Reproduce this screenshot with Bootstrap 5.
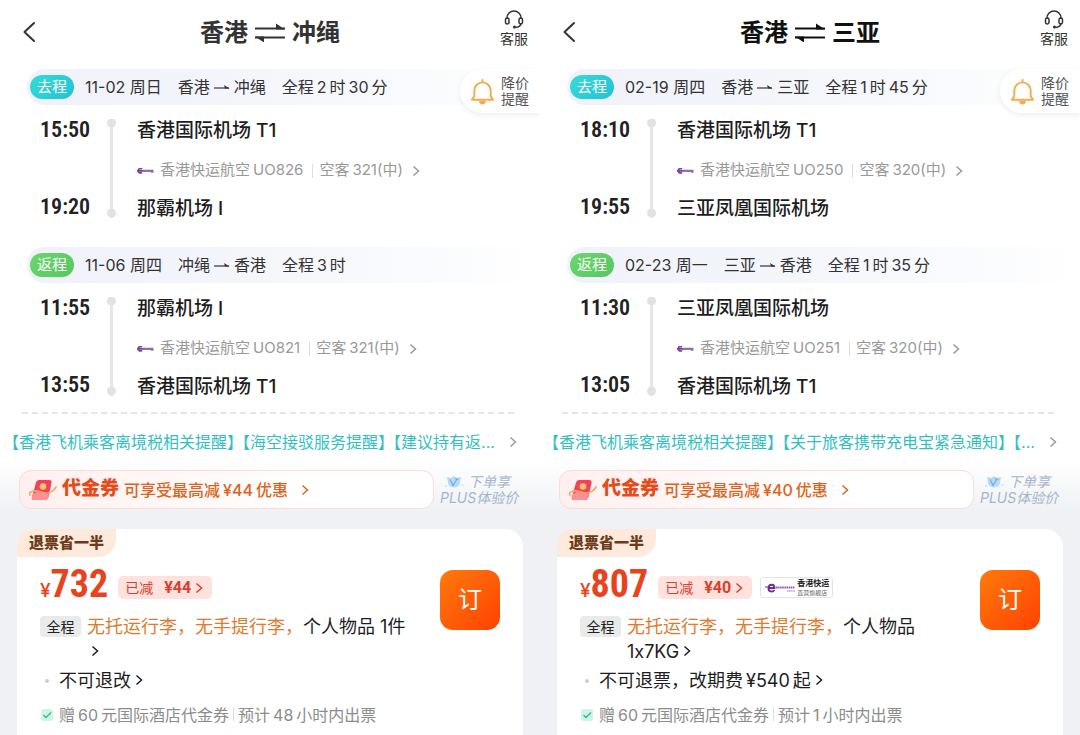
<!DOCTYPE html>
<html lang="zh-CN">
<head>
<meta charset="utf-8">
<meta name="viewport" content="width=device-width, initial-scale=1">
<title>香港往返机票</title>
<link href="https://cdn.jsdelivr.net/npm/bootstrap@5.3.0/dist/css/bootstrap.min.css" rel="stylesheet">
<style>
body{font-family:Inter,"Noto Sans CJK SC",sans-serif;color:#222;background:#fff;line-height:1.5}
svg{display:block;flex:none}
button{font-family:inherit}
.trip{min-height:100vh;background:linear-gradient(#fff 460px,#eff1f5 512px)}
.topbar{height:66px}
.topbar h1{font-size:24px;font-weight:700;color:#333;gap:6px}
.trip-b .topbar h1{color:#111}
.icon-btn{border:0;background:none;padding:0;color:#333}
.back{left:22px;top:20px}
.service{right:12px;top:10px;font-size:14px;line-height:20px}
.drop-alert{right:0;top:69px;width:80px;height:44px;border-radius:22px 0 0 22px;background:#fff;box-shadow:0 2px 6px rgba(0,0,0,.07);font-size:14px;line-height:16px;color:#555;gap:6px;padding-left:10px}
.leg-head{height:36px;margin:3px 0 0 27px;padding-left:3px;border-radius:18px 0 0 18px;background:linear-gradient(90deg,#f0f1fa,#f6f8fd 60%,#fff);font-size:16px;color:#333;gap:16px}
.leg-head .tag{height:24px;width:44px;border-radius:12px;color:#fff;font-size:15px;margin-right:-5px;background:linear-gradient(135deg,#35dcd8,#22c1d6)}
.leg-head .tag-back{background:linear-gradient(135deg,#6bd868,#55c763)}
.leg + .leg .leg-head{margin-top:18px}
.cities{gap:4px}
.leg-body{display:grid;grid-template-columns:47px 9px 1fr;column-gap:20px;padding:7px 20px 0 40px}
.times{font-family:"Roboto Condensed",Roboto,sans-serif;font-size:22px;font-weight:600;line-height:36px;text-align:right;color:#222;padding-bottom:4px}
.rail{width:9px;margin:7px 0 11px;background:radial-gradient(circle at 50% 4px,#e2e2e2 4px,transparent 5px),radial-gradient(circle at 50% calc(100% - 5px),#e2e2e2 4px,transparent 5px),linear-gradient(#e6e6e6,#e6e6e6) center/3px 100% no-repeat}
.places>div{height:39px}
.places{margin-left:1px}
.places .port{font-size:19px;font-weight:500;color:#1d1d1d}
.carrier{font-size:15px;color:#999;gap:6px}
.carrier .sep,.perk .sep{width:1px;height:14px;background:#ddd}
.n{margin:0 3px}
.rule{border-top:2px dashed #e6e6e8;margin:5px 26px 0 22px}
.notice{height:56px;font-size:16px;color:#33bfc2;text-decoration:none;padding:0 23px 0 11px}
.notice .msg{font-feature-settings:"halt";display:flex;gap:7px;white-space:nowrap}
.deal-row{padding:0 23px 0 19px;gap:6px}
.voucher{height:39px;border:1px solid #f8ddd9;border-radius:12px;background:linear-gradient(90deg,#fff0ef,#fff 70%);color:#dc6420;font-size:16px;font-weight:500;padding:0 9px;gap:5px}
.voucher b{font-size:19px;font-weight:900;color:#e34d1c}
.plus-price{width:77px;font-size:14px;font-style:italic;line-height:16px;color:#a3b5cb;text-decoration:none;white-space:nowrap}
.fare{margin:20px 17px 0;border-radius:18px 18px 0 0;background:#fff}
.ribbon{height:28px;width:99px;border-radius:16px 0 18px 0;background:#fdeadd;color:#6c3b19;font-weight:900;font-size:15px}
.fare-body{padding:9px 23px 0;gap:24px}
.price-line{height:43px;gap:10px;color:#e8431c}
.price{font-family:"Roboto Condensed",Roboto,sans-serif;font-size:38px;font-weight:700;line-height:43px}
.price small{font-size:19px;font-weight:500;font-family:Inter,sans-serif}
.saved{height:23px;border-radius:5px;background:#ffe2de;color:#d9402c;font-size:14px;border:0;padding:0 9px 0 7px;gap:11px}
.saved b{font-size:16px;font-family:Roboto,sans-serif}
.shop{height:21px;border:1px solid #e4e4e8;border-radius:3px;padding:0 3px 0 4px;gap:1px;font-size:6px;line-height:9px;color:#666;margin-left:-2px;white-space:nowrap}
.shop b{color:#222;font-size:8px}
.scope{background:#e9ebeb;border-radius:4px;font-size:14px;line-height:21px;height:21px;width:41px;color:#222}
.terms{font-size:18px;line-height:25px;color:#1d1d1d}
.warn{color:#df7b30}
.terms svg{display:inline-block;margin-left:4px;vertical-align:1px}
.bag{margin-top:5px;gap:6px;min-height:50px}
.bag .scope{margin-top:2px}
.rulesline{margin-top:4px;gap:10px;padding-left:5px}
.rulesline i{width:4px;height:4px;border-radius:50%;background:#ccc}
.perk{font-size:16px;line-height:24px;color:#8c8c8c;margin-top:10px;gap:5px;white-space:nowrap}
.perk .sep{display:inline-block;margin:0 4px}
.book{margin-top:4px;width:60px;height:60px;flex:none;border:0;border-radius:13px;background:linear-gradient(135deg,#ff7a0c,#ff4202);color:#fff;font-size:24px}
</style>
</head>
<body>
<svg width="0" height="0" class="position-absolute" aria-hidden="true">
<defs>
<symbol id="chev" viewBox="0 0 8 12"><path d="M1.500 1.500 6.500 6l-5 4.500" fill="none" stroke="currentColor" stroke-width="1.500"/></symbol>
<symbol id="backi" viewBox="0 0 14 24"><path d="M12 3 2.500 12 12 21" fill="none" stroke="currentColor" stroke-width="2" stroke-linecap="round" stroke-linejoin="round"/></symbol>
<symbol id="swap" viewBox="0 0 32 18"><path d="M1 5h30M1 14h30" stroke="currentColor" stroke-width="2"/><path d="M22 0 31 6H22zM10 19 1 13h9z" fill="currentColor"/></symbol>
<symbol id="to" viewBox="0 0 16 8"><path d="M0 5h15" stroke="currentColor" stroke-width="1.200"/><path d="M10 2l5.500 3.500H11z" fill="currentColor"/></symbol>
<symbol id="head" viewBox="0 0 20 19"><g fill="none" stroke="currentColor" stroke-width="1.500"><path d="M3 9V8a7 7 0 0 1 14 0v1M17 13c0 3-2 4-5 4.500"/><rect x="1.500" y="8" width="3.500" height="6" rx="1.700"/><rect x="15" y="8" width="3.500" height="6" rx="1.700"/></g><circle cx="10.500" cy="17" r="1.600" fill="currentColor"/></symbol>
<symbol id="bell" viewBox="0 0 26 28"><path d="M13 2v2M4.500 19V13a8.500 8.500 0 0 1 17 0v6M4.500 19 2 22.500h22L21.500 19" fill="none" stroke="#f3ab4d" stroke-width="2" stroke-linecap="round" stroke-linejoin="round"/><path d="M9.500 24h7a3.500 3.500 0 0 1-7 0z" fill="#f3ab4d"/></symbol>
<symbol id="uo" viewBox="0 0 17 6"><path d="M5 1.200A2.200 2.200 0 1 0 5 4.300M0 2.800h16" fill="none" stroke="#7846a0" stroke-width="1.700"/><path d="M6 1.800h10.500v3H14V3.300H6z" fill="#9068b0"/></symbol>
<symbol id="uo2" viewBox="0 0 31 12"><path d="M0 5h4" stroke="#6d2b8f" stroke-width="1"/><path d="M3 6h6.500C9.500 2 4 1.500 3.500 6c-.2 4 4 4.500 6 2" fill="none" stroke="#6d2b8f" stroke-width="1.900"/><path d="M11 5.500h19" stroke="#8b56a8" stroke-width="2" stroke-dasharray="1.500 .6"/><path d="M22 9h8" stroke="#b694c8" stroke-width="1.400" stroke-dasharray="1.200 .6"/></symbol>
<symbol id="packet" viewBox="0 0 28 22"><path d="M10 1h10q3 0 2.500 3l-3 14q-.7 3-4 3H5q-3 0-2-3L7 3.500Q7.600 1 10 1z" fill="#f4405a"/><path d="M4 15c5-4 11-1 16 0l-.8 3.500q-.7 2.500-4 2.500H5q-3 0-2-3z" fill="#ff8f95"/><circle cx="14" cy="7.500" r="3.300" fill="#ffc56b"/><path d="M1 16c-2-4 5-5 11-3 6 2 12 .5 15-5" fill="none" stroke="#f5a866" stroke-width="1.700" stroke-linecap="round"/></symbol>
<symbol id="gem" viewBox="0 0 20 14"><path d="M3 2l4 1 3-2 3 2 4-1-1.500 8q-5.500 5-11 0z" fill="#b5dcf6"/><path d="M6 4.500l3 6 4-6.500M11 3.500l3.500 1" fill="none" stroke="#78abe0" stroke-width="1.300"/><path d="M1 11h2M17.500 10h2" stroke="#b8d4ee"/></symbol>
<symbol id="tick" viewBox="0 0 14 14"><rect x="1" y="1" width="12" height="12" rx="3" fill="#cdf5e6"/><path d="M3.500 7 6 9.500 11 4.500" fill="none" stroke="#35b890" stroke-width="1.400"/></symbol>
</defs>
</svg>

<main class="row g-0">
<section class="trip trip-a col-6 position-relative d-flex flex-column">
  <header class="topbar d-flex align-items-center justify-content-center">
    <button class="icon-btn back position-absolute" aria-label="返回"><svg width="14" height="24"><use href="#backi"/></svg></button>
    <h1 class="d-flex align-items-center m-0"><span>香港</span><svg width="32" height="19"><use href="#swap"/></svg><span>冲绳</span></h1>
    <button class="icon-btn service position-absolute d-flex flex-column align-items-center"><svg width="20" height="19"><use href="#head"/></svg>客服</button>
  </header>
  <button class="icon-btn drop-alert position-absolute d-flex align-items-center text-start"><svg width="25" height="27"><use href="#bell"/></svg><span>降价<br>提醒</span></button>

  <article class="leg">
    <div class="leg-head d-flex align-items-center"><span class="tag d-flex align-items-center justify-content-center">去程</span><span>11-02 周日</span><span class="cities d-flex align-items-center">香港<svg width="16" height="8"><use href="#to"/></svg>冲绳</span><span>全程<span class="n">2</span>时<span class="n">30</span>分</span></div>
    <div class="leg-body">
      <div class="times d-flex flex-column justify-content-between"><time>15:50</time><time>19:20</time></div><div class="rail"></div>
      <div class="places">
        <div class="port d-flex align-items-center">香港国际机场 T1</div>
        <div class="carrier d-flex align-items-center"><svg width="17" height="6"><use href="#uo"/></svg><span>香港快运航空<span class="n">UO826</span></span><span class="sep"></span><span>空客<span class="n">321(中)</span></span><svg width="8" height="12"><use href="#chev"/></svg></div>
        <div class="port d-flex align-items-center">那霸机场 I</div>
      </div>
    </div>
  </article>
  <article class="leg">
    <div class="leg-head d-flex align-items-center"><span class="tag tag-back d-flex align-items-center justify-content-center">返程</span><span>11-06 周四</span><span class="cities d-flex align-items-center">冲绳<svg width="16" height="8"><use href="#to"/></svg>香港</span><span>全程<span class="n">3</span>时</span></div>
    <div class="leg-body">
      <div class="times d-flex flex-column justify-content-between"><time>11:55</time><time>13:55</time></div><div class="rail"></div>
      <div class="places">
        <div class="port d-flex align-items-center">那霸机场 I</div>
        <div class="carrier d-flex align-items-center"><svg width="17" height="6"><use href="#uo"/></svg><span>香港快运航空<span class="n">UO821</span></span><span class="sep"></span><span>空客<span class="n">321(中)</span></span><svg width="8" height="12"><use href="#chev"/></svg></div>
        <div class="port d-flex align-items-center">香港国际机场 T1</div>
      </div>
    </div>
  </article>
  <div class="rule"></div>
  <a href="#" class="notice d-flex align-items-center justify-content-between"><span class="msg"><span>【香港飞机乘客离境税相关提醒】</span><span>【海空接驳服务提醒】</span><span>【建议持有返...</span></span><svg width="8" height="12" color="#999"><use href="#chev"/></svg></a>
  <div class="deal-row d-flex align-items-center">
    <button class="voucher flex-grow-1 d-flex align-items-center"><svg width="28" height="22"><use href="#packet"/></svg><b>代金券</b><span>可享受最高减<span class="n">¥44</span>优惠</span><svg class="ms-2" width="8" height="12"><use href="#chev"/></svg></button>
    <a href="#" class="plus-price"><span class="d-flex align-items-center ps-1 gap-1"><svg width="20" height="14"><use href="#gem"/></svg>下单享</span>PLUS体验价</a>
  </div>
  <div class="fare flex-grow-1">
    <div class="ribbon d-flex align-items-center justify-content-center">退票省一半</div>
    <div class="fare-body d-flex">
      <div class="flex-grow-1">
        <div class="price-line d-flex align-items-center"><span class="price"><small>¥</small>732</span><button class="saved d-flex align-items-center"><span>已减</span><span class="d-flex align-items-center gap-1"><b>¥44</b><svg width="8" height="12"><use href="#chev"/></svg></span></button></div>
        <div class="bag d-flex"><span class="scope flex-shrink-0 text-center">全程</span><span class="terms"><span class="warn">无托运行李，无手提行李，</span><span>个人物品 1件</span> <svg width="8" height="12"><use href="#chev"/></svg></span></div>
        <div class="rulesline terms d-flex align-items-center"><i></i><span>不可退改<svg width="8" height="12"><use href="#chev"/></svg></span></div>
        <div class="perk d-flex align-items-center"><svg width="14" height="14"><use href="#tick"/></svg><span>赠<span class="n">60</span>元国际酒店代金券<span class="sep"></span>预计<span class="n">48</span>小时内出票</span></div>
      </div>
      <button class="book">订</button>
    </div>
  </div>
</section>

<section class="trip trip-b col-6 position-relative d-flex flex-column">
  <header class="topbar d-flex align-items-center justify-content-center">
    <button class="icon-btn back position-absolute" aria-label="返回"><svg width="14" height="24"><use href="#backi"/></svg></button>
    <h1 class="d-flex align-items-center m-0"><span>香港</span><svg width="32" height="19"><use href="#swap"/></svg><span>三亚</span></h1>
    <button class="icon-btn service position-absolute d-flex flex-column align-items-center"><svg width="20" height="19"><use href="#head"/></svg>客服</button>
  </header>
  <button class="icon-btn drop-alert position-absolute d-flex align-items-center text-start"><svg width="25" height="27"><use href="#bell"/></svg><span>降价<br>提醒</span></button>

  <article class="leg">
    <div class="leg-head d-flex align-items-center"><span class="tag d-flex align-items-center justify-content-center">去程</span><span>02-19 周四</span><span class="cities d-flex align-items-center">香港<svg width="16" height="8"><use href="#to"/></svg>三亚</span><span>全程<span class="n">1</span>时<span class="n">45</span>分</span></div>
    <div class="leg-body">
      <div class="times d-flex flex-column justify-content-between"><time>18:10</time><time>19:55</time></div><div class="rail"></div>
      <div class="places">
        <div class="port d-flex align-items-center">香港国际机场 T1</div>
        <div class="carrier d-flex align-items-center"><svg width="17" height="6"><use href="#uo"/></svg><span>香港快运航空<span class="n">UO250</span></span><span class="sep"></span><span>空客<span class="n">320(中)</span></span><svg width="8" height="12"><use href="#chev"/></svg></div>
        <div class="port d-flex align-items-center">三亚凤凰国际机场</div>
      </div>
    </div>
  </article>
  <article class="leg">
    <div class="leg-head d-flex align-items-center"><span class="tag tag-back d-flex align-items-center justify-content-center">返程</span><span>02-23 周一</span><span class="cities d-flex align-items-center">三亚<svg width="16" height="8"><use href="#to"/></svg>香港</span><span>全程<span class="n">1</span>时<span class="n">35</span>分</span></div>
    <div class="leg-body">
      <div class="times d-flex flex-column justify-content-between"><time>11:30</time><time>13:05</time></div><div class="rail"></div>
      <div class="places">
        <div class="port d-flex align-items-center">三亚凤凰国际机场</div>
        <div class="carrier d-flex align-items-center"><svg width="17" height="6"><use href="#uo"/></svg><span>香港快运航空<span class="n">UO251</span></span><span class="sep"></span><span>空客<span class="n">320(中)</span></span><svg width="8" height="12"><use href="#chev"/></svg></div>
        <div class="port d-flex align-items-center">香港国际机场 T1</div>
      </div>
    </div>
  </article>
  <div class="rule"></div>
  <a href="#" class="notice d-flex align-items-center justify-content-between"><span class="msg"><span>【香港飞机乘客离境税相关提醒】</span><span>【关于旅客携带充电宝紧急通知】</span><span>【...</span></span><svg width="8" height="12" color="#999"><use href="#chev"/></svg></a>
  <div class="deal-row d-flex align-items-center">
    <button class="voucher flex-grow-1 d-flex align-items-center"><svg width="28" height="22"><use href="#packet"/></svg><b>代金券</b><span>可享受最高减<span class="n">¥40</span>优惠</span><svg class="ms-2" width="8" height="12"><use href="#chev"/></svg></button>
    <a href="#" class="plus-price"><span class="d-flex align-items-center ps-1 gap-1"><svg width="20" height="14"><use href="#gem"/></svg>下单享</span>PLUS体验价</a>
  </div>
  <div class="fare flex-grow-1">
    <div class="ribbon d-flex align-items-center justify-content-center">退票省一半</div>
    <div class="fare-body d-flex">
      <div class="flex-grow-1">
        <div class="price-line d-flex align-items-center"><span class="price"><small>¥</small>807</span><button class="saved d-flex align-items-center"><span>已减</span><span class="d-flex align-items-center gap-1"><b>¥40</b><svg width="8" height="12"><use href="#chev"/></svg></span></button><span class="shop d-flex align-items-center"><svg width="31" height="12"><use href="#uo2"/></svg><span><b>香港快运</b><br>直营旗舰店</span></span></div>
        <div class="bag d-flex"><span class="scope flex-shrink-0 text-center">全程</span><span class="terms"><span class="warn">无托运行李，无手提行李，</span><span>个人物品</span> <span>1x7KG</span><svg width="8" height="12"><use href="#chev"/></svg></span></div>
        <div class="rulesline terms d-flex align-items-center"><i></i><span>不可退票，改期费<span class="n">¥540</span>起<svg width="8" height="12"><use href="#chev"/></svg></span></div>
        <div class="perk d-flex align-items-center"><svg width="14" height="14"><use href="#tick"/></svg><span>赠<span class="n">60</span>元国际酒店代金券<span class="sep"></span>预计<span class="n">1</span>小时内出票</span></div>
      </div>
      <button class="book">订</button>
    </div>
  </div>
</section>
</main>
<script src="https://cdn.jsdelivr.net/npm/bootstrap@5.3.0/dist/js/bootstrap.bundle.min.js"></script>
</body>
</html>
